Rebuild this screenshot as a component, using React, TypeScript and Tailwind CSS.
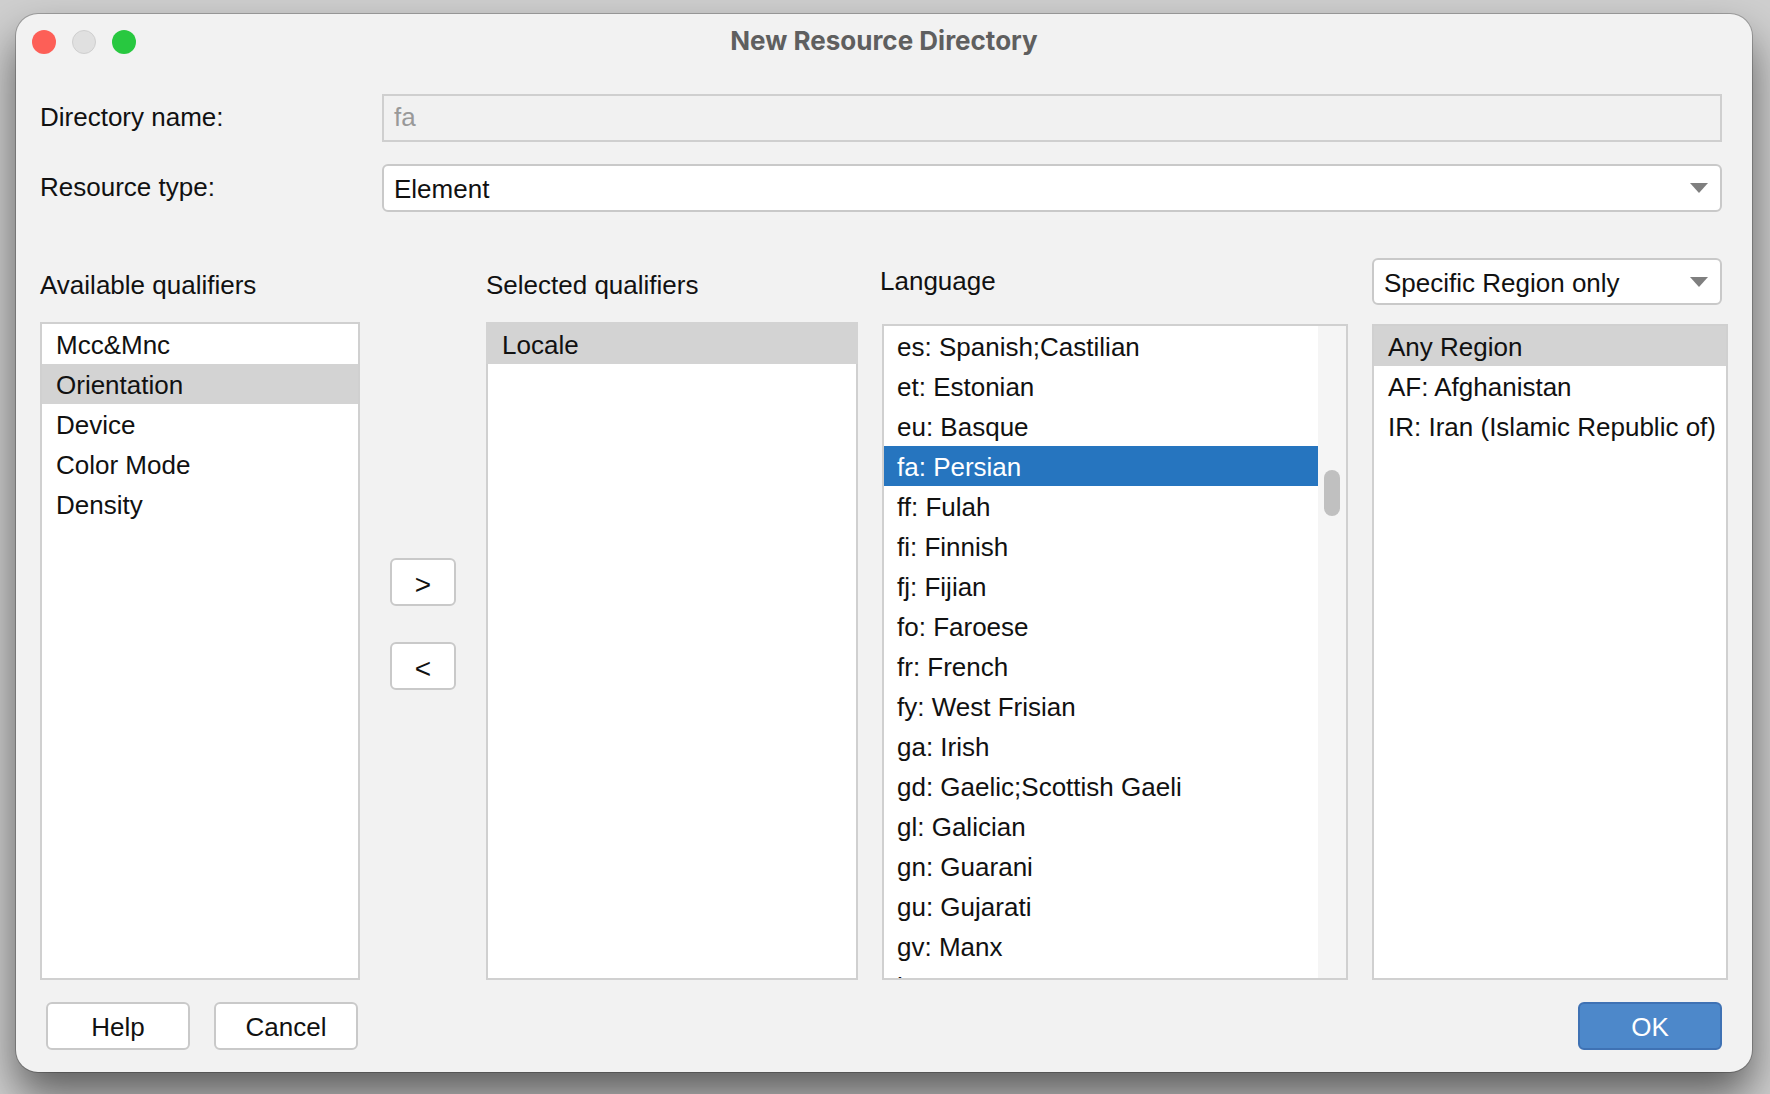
const available = ['Mcc&Mnc', 'Orientation', 'Device', 'Color Mode', 'Density'];
const languages = [
  'es: Spanish;Castilian',
  'et: Estonian',
  'eu: Basque',
  'fa: Persian',
  'ff: Fulah',
  'fi: Finnish',
  'fj: Fijian',
  'fo: Faroese',
  'fr: French',
  'fy: West Frisian',
  'ga: Irish',
  'gd: Gaelic;Scottish Gaeli',
  'gl: Galician',
  'gn: Guarani',
  'gu: Gujarati',
  'gv: Manx',
  'ha: Hausa',
];
const regions = ['Any Region', 'AF: Afghanistan', 'IR: Iran (Islamic Republic of)'];

function Caret() {
  return (
    <svg width="18" height="10" viewBox="0 0 18 10" className="shrink-0">
      <polygon points="0,0 18,0 9,10" fill="#7f7f7f" />
    </svg>
  );
}

function Select({ label, className }: { label: string; className: string }) {
  return (
    <div className={`flex items-center justify-between rounded-[6px] border-2 border-[#c9c9c9] bg-white pl-[10px] pr-[12px] ${className}`}>
      <span className="pt-[2px]">{label}</span>
      <Caret />
    </div>
  );
}

function Button({ label, className }: { label: string; className: string }) {
  return (
    <div className={`flex h-[48px] items-center justify-center rounded-[6px] border-2 border-[#c9c9c9] bg-white pt-[2px] ${className}`}>
      {label}
    </div>
  );
}

export default function App() {
  return (
    <div className="h-[1094px] w-[1770px] overflow-hidden bg-[#cfcfcf] pl-[16px] pt-[14px] font-['Liberation_Sans',Arial,sans-serif] text-[26px] leading-none text-[#111]">
      <div className="h-[1058px] w-[1736px] rounded-[22px] bg-[#f2f2f2] shadow-[0_0_0_1px_rgba(0,0,0,0.22),0_24px_44px_rgba(0,0,0,0.55)]">
        {/* title bar */}
        <div className="relative flex h-[80px] justify-center pt-[13px]">
          <div className="absolute left-[16px] top-[16px] flex gap-[16px]">
            <div className="h-[24px] w-[24px] rounded-full bg-[#fd5f57]" />
            <div className="h-[24px] w-[24px] rounded-full border border-[#cfcfcf] bg-[#e0e0e0]" />
            <div className="h-[24px] w-[24px] rounded-full bg-[#28c840]" />
          </div>
          <span className="font-['Inter',sans-serif] text-[26px] font-bold leading-[28px] text-[#5f5f5f]">New Resource Directory</span>
        </div>

        <div className="flex h-[48px] items-center pl-[24px] pr-[30px]">
          <span className="w-[342px] pb-[2px]">Directory name:</span>
          <div className="flex h-full flex-1 items-center border-2 border-[#cfcfcf] bg-[#f1f1f1] pb-[2px] pl-[10px] text-[#999]">fa</div>
        </div>
        <div className="mt-[22px] flex h-[48px] items-center pl-[24px] pr-[30px]">
          <span className="w-[342px] pb-[2px]">Resource type:</span>
          <Select label="Element" className="h-full flex-1" />
        </div>

        <div className="ml-[24px] mt-[46px] flex h-[722px]">
          <div className="flex w-[320px] flex-col">
            <div className="flex h-[64px] items-center pb-[10px]">Available qualifiers</div>
            <div className="flex-1 border-2 border-[#d0d0d0] bg-white">
              {available.map((a) => (
                <div key={a} className={`flex h-[40px] items-center pl-[14px] pt-[2px] ${a === 'Orientation' ? 'bg-[#d3d3d3]' : ''}`}>{a}</div>
              ))}
            </div>
          </div>

          <div className="flex w-[126px] flex-col gap-[36px] pl-[30px] pt-[300px]">
            <Button label=">" className="w-[66px] !pt-[6px] text-[28px]" />
            <Button label="<" className="w-[66px] !pt-[6px] text-[28px]" />
          </div>

          <div className="flex w-[372px] flex-col">
            <div className="flex h-[64px] items-center pb-[10px]">Selected qualifiers</div>
            <div className="flex-1 border-2 border-[#d0d0d0] bg-white">
              <div className="-mx-[2px] -mt-[2px] flex h-[42px] items-center bg-[#d3d3d3] pl-[16px] pt-[4px]">Locale</div>
            </div>
          </div>

          <div className="ml-[24px] flex w-[466px] flex-col">
            <div className="-ml-[2px] flex h-[66px] items-center pb-[20px]">Language</div>
            <div className="flex min-h-0 flex-1 overflow-hidden border-2 border-[#d0d0d0] bg-white">
              <div className="min-w-0 flex-1 overflow-hidden">
                {languages.map((l) => (
                  <div key={l} className={`flex h-[40px] shrink-0 items-center pl-[13px] pt-[2px] ${l.startsWith('fa:') ? 'bg-[#2675bf] text-white' : ''}`}>{l}</div>
                ))}
              </div>
              <div className="w-[28px] shrink-0 bg-[#f5f5f5] pl-[6px] pt-[144px]">
                <div className="h-[46px] w-[16px] rounded-full bg-[#c0c0c0]" />
              </div>
            </div>
          </div>

          <div className="ml-[24px] flex w-[356px] flex-col">
            <Select label="Specific Region only" className="mb-[19px] h-[47px] w-[350px]" />
            <div className="flex-1 border-2 border-[#d0d0d0] bg-white">
              {regions.map((r, i) => (
                <div key={r} className={`flex h-[40px] items-center whitespace-nowrap pl-[14px] pt-[2px] ${i === 0 ? 'bg-[#d3d3d3]' : ''}`}>{r}</div>
              ))}
            </div>
          </div>
        </div>

        <div className="mt-[22px] flex items-center justify-between px-[30px]">
          <div className="flex gap-[24px]">
            <Button label="Help" className="w-[144px]" />
            <Button label="Cancel" className="w-[144px]" />
          </div>
          <div className="flex h-[48px] w-[144px] items-center justify-center rounded-[6px] border-2 border-[#3f72b4] bg-[#4d88ca] pt-[2px] text-white">OK</div>
        </div>
      </div>
    </div>
  );
}
